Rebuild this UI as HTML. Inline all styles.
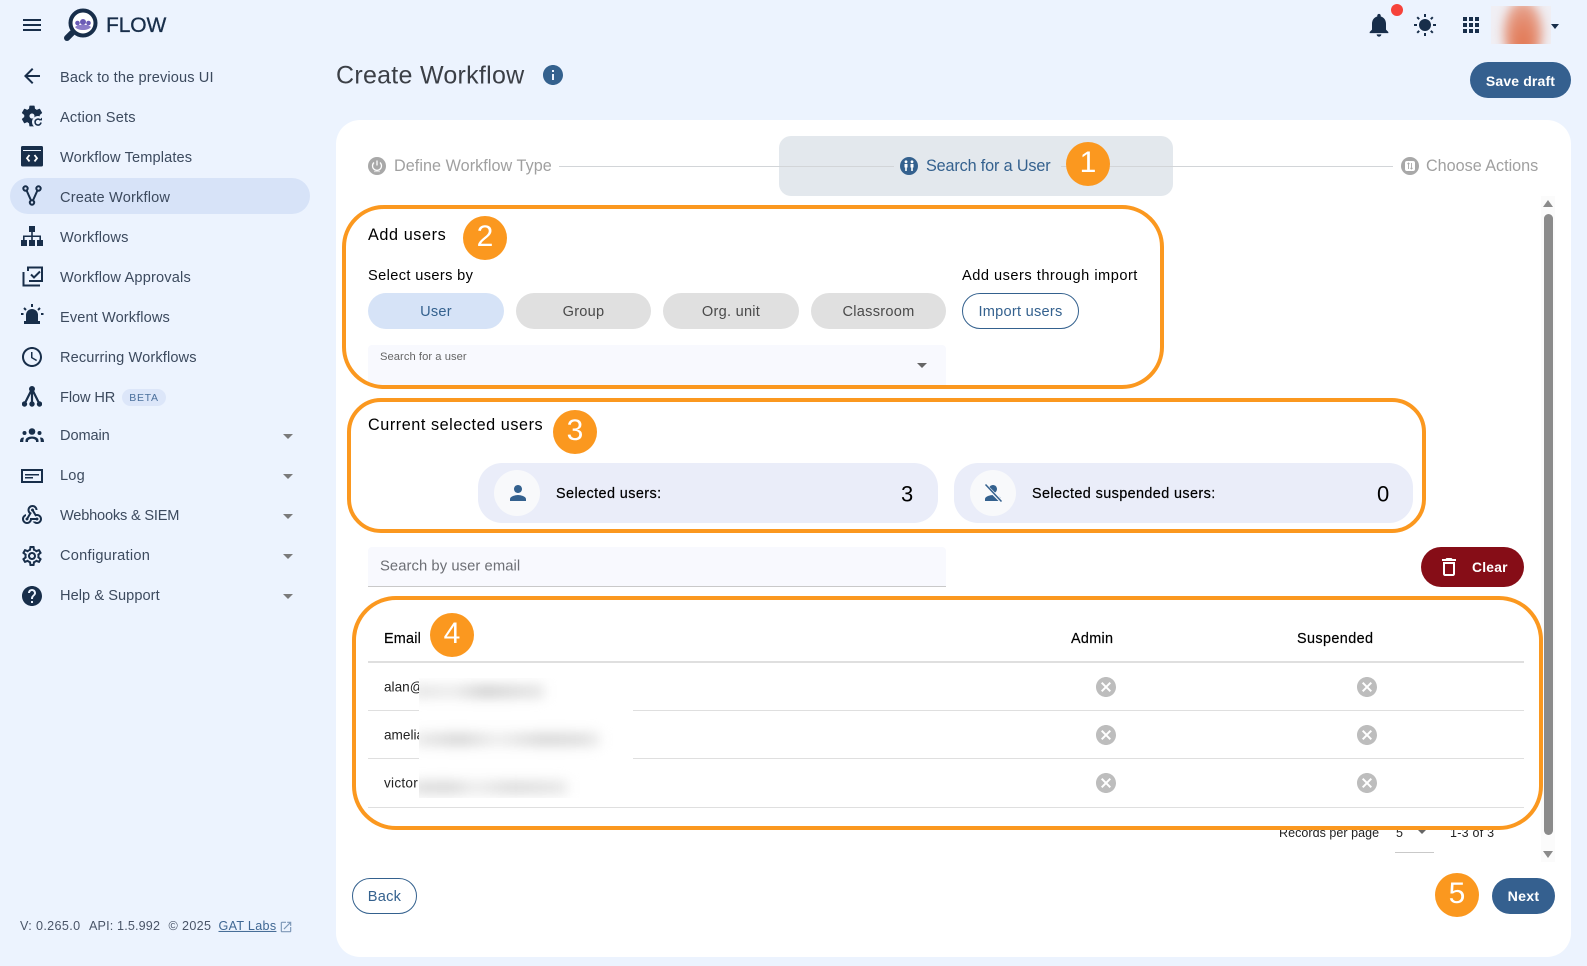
<!DOCTYPE html>
<html><head><meta charset="utf-8"><title>Create Workflow</title>
<style>
html,body{margin:0;padding:0}
body{width:1587px;height:966px;position:relative;overflow:hidden;background:#ecf3fe;font-family:"Liberation Sans",sans-serif;color:#000}
.a{position:absolute}
.t{position:absolute;white-space:nowrap;transform:translateY(calc(-50% + 1.5px));line-height:1.2}
.s{font-size:14.6px;letter-spacing:.17px;color:#3c4a5e;left:60px}
.ic{position:absolute;fill:#182e4a}
.ar{position:absolute;width:0;height:0;border-left:5px solid transparent;border-right:5px solid transparent;border-top:5px solid #7a7a7a}
.pill{position:absolute;border-radius:18px;display:flex;align-items:center;justify-content:center;font-size:14.6px;letter-spacing:.25px;white-space:nowrap;box-sizing:border-box;padding-top:1px}
.g{background:#e0e0e0;color:#4a4a4a}
.o{position:absolute;box-sizing:border-box;border:4px solid #fb981f}
.b{position:absolute;width:44px;height:44px;box-sizing:border-box;padding-bottom:2px;border-radius:50%;background:#fb981f;color:#fff;font-size:30px;display:flex;align-items:center;justify-content:center;line-height:1}
.l{position:absolute;background:#dfdfdf;height:1px}
.x{position:absolute;width:24px;height:24px;fill:#bdbdbd}
.bar{position:absolute;filter:blur(6px);height:13px}
</style></head><body>

<!-- top -->
<svg class="ic" style="left:20px;top:13px" width="24" height="24" viewBox="0 0 24 24"><path d="M3 18h18v-2H3v2zm0-5h18v-2H3v2zm0-7v2h18V6H3z"/></svg>
<svg class="a" style="left:62px;top:7px" width="38" height="36" viewBox="0 0 38 36">
<circle cx="21" cy="16" r="12.5" fill="#fff" stroke="#182e4a" stroke-width="4"/>
<circle cx="21" cy="15" r="3" fill="#6a5bb5"/><circle cx="15.5" cy="16" r="2.3" fill="#6a5bb5"/><circle cx="26.5" cy="16" r="2.3" fill="#6a5bb5"/><path d="M13 20c3 4 13 4 16 0l-3-2H16z" fill="#8b7cc8"/>
<path d="M10 26l-5 5" stroke="#182e4a" stroke-width="6" stroke-linecap="round"/></svg>
<div class="t" style="left:106px;top:24px;font-size:21px;letter-spacing:-.1px;color:#182e4a;-webkit-text-stroke:.3px #182e4a">FLOW</div>

<div class="a" style="left:10px;top:178px;width:300px;height:36px;border-radius:18px;background:#d7e3f8"></div>

<svg class="ic" style="left:20px;top:64px" width="24" height="24" viewBox="0 0 24 24"><path d="M20 11H7.83l5.59-5.59L12 4l-8 8 8 8 1.41-1.41L7.83 13H20v-2z"/></svg>
<div class="t s" style="top:77px;letter-spacing:.12px">Back to the previous UI</div>

<svg class="ic" style="left:19px;top:103px" width="26" height="26" viewBox="0 0 24 24"><path d="M19.14 12.94c.04-.3.06-.61.06-.94 0-.32-.02-.64-.07-.94l2.03-1.58c.18-.14.23-.41.12-.61l-1.92-3.32c-.12-.22-.37-.29-.59-.22l-2.39.96c-.5-.38-1.03-.7-1.62-.94l-.36-2.54c-.04-.24-.24-.41-.48-.41h-3.84c-.24 0-.43.17-.47.41l-.36 2.54c-.59.24-1.13.57-1.62.94l-2.39-.96c-.22-.08-.47 0-.59.22L2.74 8.87c-.12.21-.08.47.12.61l2.03 1.58c-.05.3-.09.63-.09.94s.02.64.07.94l-2.03 1.58c-.18.14-.23.41-.12.61l1.92 3.32c.12.22.37.29.59.22l2.39-.96c.5.38 1.03.7 1.62.94l.36 2.54c.05.24.24.41.48.41h3.84c.24 0 .44-.17.47-.41l.36-2.54c.59-.24 1.13-.56 1.62-.94l2.39.96c.22.08.47 0 .59-.22l1.92-3.32c.12-.22.07-.47-.12-.61l-2.01-1.58zM12 14.3c-1.3 0-2.3-1-2.3-2.3s1-2.3 2.3-2.3 2.3 1 2.3 2.3-1 2.3-2.3 2.3z"/></svg>
<svg class="a" style="left:32px;top:116px" width="12" height="12" viewBox="0 0 12 12"><circle cx="6" cy="6" r="6" fill="#ecf3fe"/><path d="M9 6.5A3 3 0 1 1 8 3.8" fill="none" stroke="#182e4a" stroke-width="1.6"/><path d="M6.8 4.4H10V1.6z" fill="#182e4a"/></svg>
<div class="t s" style="top:117px">Action Sets</div>

<svg class="a" style="left:21px;top:146px" width="22" height="22" viewBox="0 0 22 22"><rect width="22" height="20.5" rx="1.5" fill="#182e4a"/><rect x="2" y="4" width="18" height="1" fill="#ecf3fe"/><path d="M8.5 9l-2.5 3.2 2.5 3.2M13.5 9l2.500 3.2-2.500 3.2" fill="none" stroke="#fff" stroke-width="1.8"/></svg>
<div class="t s" style="top:157px;letter-spacing:.12px">Workflow Templates</div>

<svg class="a" style="left:22px;top:185px" width="20" height="22" viewBox="0 0 20 22" fill="none" stroke="#182e4a" stroke-width="2"><circle cx="3.5" cy="3.5" r="2.2"/><circle cx="16.5" cy="3.5" r="2.2"/><circle cx="10" cy="17.5" r="2.2"/><path d="M4.6 5.500L9 15.400M15.400 5.500L11 15.400"/></svg>
<div class="t s" style="top:197px">Create Workflow</div>

<svg class="a" style="left:21px;top:226px" width="22" height="21" viewBox="0 0 22 21" fill="#182e4a"><rect x="8" y="0" width="6" height="6"/><rect x="0" y="14" width="6" height="6"/><rect x="8" y="14" width="6" height="6"/><rect x="16" y="14" width="6" height="6"/><path d="M10.200 6h1.600v3.500H20V14h-1.600v-3H11.800v3h-1.600v-3H3.600v3H2V9.500h8.200z"/></svg>
<div class="t s" style="top:237px">Workflows</div>

<svg class="a" style="left:22px;top:266px" width="21" height="21" viewBox="0 0 21 21" fill="none" stroke="#182e4a" stroke-width="2"><path d="M6 5V1.500h14V15H7M1.500 6V19.500H18"/><path d="M9 8.500l3 3 6-6" stroke-width="2"/></svg>
<div class="t s" style="top:277px">Workflow Approvals</div>

<svg class="a" style="left:20px;top:304px" width="24" height="23" viewBox="0 0 24 23" fill="#182e4a"><path d="M6 17v-6a6 6 0 0 1 12 0v6h2v3H4v-3z"/><path d="M12 0v3M4 4l2 2M20 4l-2 2M1 10h2.500M21 10h2.500" stroke="#182e4a" stroke-width="2"/></svg>
<div class="t s" style="top:317px;letter-spacing:.1px">Event Workflows</div>

<svg class="ic" style="left:20px;top:345px" width="24" height="24" viewBox="0 0 24 24"><path d="M11.990 2C6.470 2 2 6.480 2 12s4.470 10 9.990 10C17.520 22 22 17.520 22 12S17.520 2 11.990 2zM12 20c-4.420 0-8-3.580-8-8s3.580-8 8-8 8 3.580 8 8-3.580 8-8 8zm.5-13H11v6l5.250 3.150.75-1.230-4.500-2.670z"/></svg>
<div class="t s" style="top:357px;letter-spacing:.12px">Recurring Workflows</div>

<svg class="a" style="left:22px;top:386px" width="20" height="21" viewBox="0 0 20 21" fill="#182e4a" stroke="#182e4a"><circle cx="10" cy="3" r="2.500"/><circle cx="2.500" cy="18" r="2.200"/><circle cx="10" cy="18" r="2.200"/><circle cx="17.500" cy="18" r="2.200"/><path d="M10 3L2.500 18M10 3l7.500 15M10 3v15" fill="none" stroke-width="2.200"/></svg>
<div class="t s" style="top:397px;letter-spacing:-.1px">Flow HR</div>
<div class="a" style="left:122px;top:389px;width:44px;height:17px;border-radius:9px;background:#dce6f9;color:#4a6f9c;font-size:10.5px;letter-spacing:.7px;display:flex;align-items:center;justify-content:center">BETA</div>

<svg class="a" style="left:20px;top:428px" width="24" height="15" viewBox="0 0 24 15" fill="#182e4a"><circle cx="12" cy="3.500" r="3.300"/><circle cx="4.500" cy="5" r="2"/><circle cx="19.500" cy="5" r="2"/><path d="M5.500 14v-1.500c0-2.500 3-4 6.500-4s6.500 1.500 6.500 4V14h-2.500v-1c0-1-1.500-2.300-4-2.300s-4 1.300-4 2.300v1zM0 14c0-3 1-4.500 3.500-4.500l.5.300C3.500 11 3.200 12.500 3.300 14zM24 14c0-3-1-4.500-3.500-4.500l-.5.300c.5 1.200.8 2.700.7 4.200z"/></svg>
<div class="t s" style="top:435px;letter-spacing:-.1px">Domain</div>
<div class="ar" style="left:283px;top:434px"></div>

<svg class="a" style="left:21px;top:469px" width="22" height="14" viewBox="0 0 22 14"><rect x="1" y="1" width="20" height="12" fill="none" stroke="#182e4a" stroke-width="2"/><rect x="4" y="5" width="14" height="1.500" fill="#182e4a"/><rect x="4" y="8" width="8" height="1.500" fill="#182e4a"/></svg>
<div class="t s" style="top:475px">Log</div>
<div class="ar" style="left:283px;top:474px"></div>

<svg class="ic" style="left:20px;top:503px" width="24" height="24" viewBox="0 0 24 24"><path d="M10 15h5.880c.27-.31.67-.5 1.120-.5.83 0 1.500.67 1.500 1.500s-.67 1.500-1.500 1.500c-.44 0-.84-.19-1.120-.5H11.900c-.46 2.280-2.480 4-4.900 4-2.760 0-5-2.240-5-5 0-2.420 1.720-4.440 4-4.900v2.060C4.840 13.560 4 14.680 4 16c0 1.650 1.350 3 3 3s3-1.350 3-3v-1zm2.500-11c1.650 0 3 1.350 3 3h2c0-2.760-2.240-5-5-5s-5 2.240-5 5c0 1.430.6 2.710 1.560 3.620l-2.350 3.910c-.68.140-1.210.750-1.210 1.470 0 .83.67 1.500 1.500 1.500s1.500-.67 1.500-1.500c0-.16-.02-.31-.07-.45l3.380-5.630C10.890 9.480 9.500 8.690 9.500 7c0-1.650 1.350-3 3-3zm4.500 9c-.64 0-1.230.2-1.720.54l-3.050-5.060C11.530 8.350 11 7.740 11 7c0-.83.67-1.500 1.500-1.500S14 6.170 14 7c0 .15-.02.290-.06.430l2.190 3.640c.28-.05.57-.07.870-.07 2.760 0 5 2.240 5 5s-2.240 5-5 5c-1.850 0-3.470-1.010-4.330-2.500h2.670c.48.320 1.050.500 1.660.500 1.650 0 3-1.350 3-3s-1.350-3-3-3z"/></svg>
<div class="t s" style="top:515px;letter-spacing:-.2px">Webhooks &amp; SIEM</div>
<div class="ar" style="left:283px;top:514px"></div>

<svg class="ic" style="left:20px;top:544px" width="24" height="24" viewBox="0 0 24 24"><path d="M19.430 12.980c.04-.32.070-.64.070-.98s-.03-.66-.07-.98l2.110-1.650c.19-.15.240-.42.120-.64l-2-3.460c-.12-.22-.39-.3-.61-.22l-2.490 1c-.52-.4-1.080-.73-1.690-.98l-.38-2.650A.488.488 0 0 0 14 2h-4c-.25 0-.46.180-.49.420l-.38 2.650c-.61.250-1.170.590-1.690.980l-2.490-1c-.23-.090-.49 0-.61.220l-2 3.460c-.13.220-.07.490.12.640l2.110 1.650c-.04.320-.07.650-.07.980s.03.660.07.980l-2.110 1.650c-.19.150-.24.420-.12.640l2 3.460c.12.220.39.300.61.220l2.490-1c.52.400 1.080.730 1.690.980l.38 2.650c.03.240.24.420.49.420h4c.25 0 .46-.180.49-.420l.38-2.650c.61-.250 1.170-.590 1.690-.980l2.490 1c.23.090.49 0 .61-.220l2-3.460c.12-.22.070-.49-.12-.64l-2.110-1.650zM17.450 11.270c.04.310.05.520.05.730 0 .210-.02.430-.05.730l-.14 1.130.89.700 1.080.840-.7 1.210-1.270-.51-1.040-.42-.9.680c-.43.320-.84.560-1.250.730l-1.060.430-.16 1.130-.2 1.350h-1.400l-.19-1.350-.16-1.130-1.060-.43c-.43-.18-.83-.41-1.230-.71l-.91-.70-1.060.43-1.270.51-.7-1.210 1.080-.84.890-.70-.14-1.130c-.03-.31-.05-.54-.05-.74s.02-.43.050-.73l.14-1.130-.89-.70-1.080-.84.7-1.210 1.270.51 1.040.42.9-.68c.43-.32.84-.56 1.250-.73l1.060-.43.160-1.130.2-1.350h1.390l.19 1.350.16 1.130 1.060.43c.43.180.83.410 1.230.71l.91.700 1.060-.43 1.270-.51.7 1.210-1.070.85-.89.70.14 1.130zM12 8c-2.210 0-4 1.790-4 4s1.790 4 4 4 4-1.790 4-4-1.790-4-4-4zm0 6c-1.100 0-2-.9-2-2s.9-2 2-2 2 .9 2 2-.9 2-2 2z"/></svg>
<div class="t s" style="top:555px;letter-spacing:.25px">Configuration</div>
<div class="ar" style="left:283px;top:554px"></div>

<svg class="ic" style="left:20px;top:584px" width="24" height="24" viewBox="0 0 24 24"><path d="M12 2C6.480 2 2 6.480 2 12s4.480 10 10 10 10-4.480 10-10S17.520 2 12 2zm1 17h-2v-2h2v2zm2.070-7.750l-.9.920C13.450 12.900 13 13.500 13 15h-2v-.5c0-1.100.45-2.100 1.170-2.830l1.240-1.260c.37-.36.59-.86.59-1.410 0-1.100-.9-2-2-2s-2 .9-2 2H8c0-2.210 1.790-4 4-4s4 1.790 4 4c0 .88-.36 1.680-.93 2.250z"/></svg>
<div class="t s" style="top:595px;letter-spacing:.05px">Help &amp; Support</div>
<div class="ar" style="left:283px;top:594px"></div>

<div class="t" style="left:20px;top:925px;font-size:12.6px;letter-spacing:.35px;color:#4a5568">V: 0.265.0</div>
<div class="t" style="left:89px;top:925px;font-size:12.6px;letter-spacing:.15px;color:#4a5568">API: 1.5.992</div>
<div class="t" style="left:168.5px;top:925px;font-size:12.6px;letter-spacing:.35px;color:#4a5568">© 2025</div>
<div class="t" style="left:218.5px;top:925px;font-size:12.6px;letter-spacing:.3px;color:#3f6793;text-decoration:underline">GAT Labs</div>
<svg class="a" style="left:279px;top:920px;fill:#7e98b8" width="14" height="14" viewBox="0 0 24 24"><path d="M19 19H5V5h7V3H5c-1.110 0-2 .9-2 2v14c0 1.100.89 2 2 2h14c1.100 0 2-.9 2-2v-7h-2v7zM14 3v2h3.590l-9.830 9.830 1.410 1.410L19 6.410V10h2V3h-7z"/></svg>

<!-- top right -->
<svg class="ic" style="left:1365px;top:11px" width="28" height="28" viewBox="0 0 24 24"><path d="M12 22c1.100 0 2-.9 2-2h-4c0 1.100.89 2 2 2zm6-6v-5c0-3.070-1.640-5.640-4.500-6.320V4c0-.83-.67-1.500-1.500-1.500s-1.500.67-1.500 1.500v.68C7.630 5.360 6 7.920 6 11v5l-2 2v1h16v-1l-2-2z"/></svg>
<div class="a" style="left:1391px;top:4px;width:12px;height:12px;border-radius:50%;background:#f6423a"></div>
<svg class="a" style="left:1413px;top:13px" width="24" height="24" viewBox="0 0 24 24"><circle cx="12" cy="12" r="6" fill="#182e4a"/><path d="M12 1v3M12 20v3M1 12h3M20 12h3M4.200 4.200l2 2M17.800 17.800l2 2M4.200 19.800l2-2M17.800 6.200l2-2" stroke="#182e4a" stroke-width="2"/></svg>
<svg class="ic" style="left:1459px;top:13px" width="24" height="24" viewBox="0 0 24 24"><path d="M4 8h4V4H4v4zm6 12h4v-4h-4v4zm-6 0h4v-4H4v4zm0-6h4v-4H4v4zm6 0h4v-4h-4v4zm6-10v4h4V4h-4zm-6 4h4V4h-4v4zm6 6h4v-4h-4v4zm0 6h4v-4h-4v4z"/></svg>
<div class="a" style="left:1491px;top:6px;width:60px;height:38px;overflow:hidden;background:#f0eff4"><div class="a" style="left:12px;top:-6px;width:40px;height:64px;border-radius:50%;background:radial-gradient(ellipse at 50% 68%,#e2754f 0%,#e48c70 40%,#e8b5a6 75%,#eddcd9 100%);filter:blur(5px)"></div></div>
<div class="a" style="left:1551px;top:24px;width:0;height:0;border-left:4.500px solid transparent;border-right:4.500px solid transparent;border-top:5px solid #182e4a"></div>

<!-- title -->
<div class="t" style="left:336px;top:74px;font-size:25px;letter-spacing:.28px;color:#3b3f46">Create Workflow</div>
<svg class="a" style="left:541px;top:63px;fill:#34618e" width="24" height="24" viewBox="0 0 24 24"><path d="M12 2C6.480 2 2 6.480 2 12s4.480 10 10 10 10-4.480 10-10S17.520 2 12 2zm1 15h-2v-6h2v6zm0-8h-2V7h2v2z"/></svg>
<div class="pill" style="left:1470px;top:62px;width:101px;height:36px;background:#35608f;color:#fff;font-weight:700;font-size:14px;letter-spacing:.15px">Save draft</div>

<!-- card -->
<div class="a" style="left:336px;top:120px;width:1235px;height:837px;border-radius:24px;background:#fff"></div>

<!-- stepper -->
<div class="a" style="left:779px;top:136px;width:394px;height:60px;border-radius:12px;background:#e3e8ed"></div>
<div class="l" style="left:559px;top:166px;width:335px;background:#d2d5d8"></div>
<div class="l" style="left:1061px;top:166px;width:332px;background:#d2d5d8"></div>
<svg class="a" style="left:367px;top:156px" width="20" height="20" viewBox="0 0 20 20"><circle cx="10" cy="10" r="9" fill="#a8a8a8"/><path d="M7 6.500a4.500 4.500 0 1 0 6 0M10 4.500v5" fill="none" stroke="#fff" stroke-width="1.300"/><path d="M7.500 15.500h5" stroke="#fff" stroke-width="1.300" stroke-dasharray="1 1"/></svg>
<div class="t" style="left:394px;top:165px;font-size:16.200px;letter-spacing:.05px;color:#a0a0a0">Define Workflow Type</div>
<svg class="a" style="left:899px;top:156px" width="20" height="20" viewBox="0 0 20 20"><circle cx="10" cy="10" r="9" fill="#34618e"/><circle cx="7" cy="5.800" r="1.400" fill="#fff"/><circle cx="13" cy="5.800" r="1.400" fill="#fff"/><path d="M5.500 8h3v3.500h-.7V15H6.200v-3.500h-.7zM11.500 8h3v3.500h-.7V15h-1.600v-3.500h-.7z" fill="#fff"/></svg>
<div class="t" style="left:926px;top:165px;font-size:16.200px;letter-spacing:-.14px;color:#34618e">Search for a User</div>
<div class="b" style="left:1066px;top:142px">1</div>
<svg class="a" style="left:1400px;top:156px" width="20" height="20" viewBox="0 0 20 20"><circle cx="10" cy="10" r="9" fill="#a8a8a8"/><rect x="5" y="5" width="10" height="10" rx="2" fill="#fff"/><path d="M8.500 7v6M7.500 8l1-1 1 1M11.500 7v6M10.500 12l1 1 1-1" fill="none" stroke="#a8a8a8" stroke-width=".9"/></svg>
<div class="t" style="left:1426px;top:165px;font-size:16.200px;letter-spacing:-.02px;color:#a0a0a0">Choose Actions</div>

<!-- scrollbar -->
<div class="a" style="left:1541px;top:196px;width:14px;height:666px;background:#fbfbfb"></div>
<div class="a" style="left:1544px;top:214px;width:9px;height:621px;border-radius:5px;background:#8b8b8b"></div>
<div class="a" style="left:1543px;top:200px;width:0;height:0;border-left:5px solid transparent;border-right:5px solid transparent;border-bottom:7px solid #8b8b8b"></div>
<div class="a" style="left:1543px;top:851px;width:0;height:0;border-left:5px solid transparent;border-right:5px solid transparent;border-top:7px solid #8b8b8b"></div>

<!-- add users -->
<div class="t" style="left:368px;top:234px;font-size:16.200px;letter-spacing:.6px">Add users</div>
<div class="t" style="left:368px;top:275px;font-size:14.600px;letter-spacing:.37px">Select users by</div>
<div class="pill" style="left:368px;top:293px;width:136px;height:36px;background:#d6e3f7;color:#34618e">User</div>
<div class="pill g" style="left:516px;top:293px;width:135px;height:36px">Group</div>
<div class="pill g" style="left:663px;top:293px;width:136px;height:36px">Org. unit</div>
<div class="pill g" style="left:811px;top:293px;width:135px;height:36px">Classroom</div>
<div class="t" style="left:962px;top:275px;font-size:14.600px;letter-spacing:.5px">Add users through import</div>
<div class="pill" style="left:962px;top:293px;width:117px;height:36px;border:1px solid #34618e;color:#34618e;background:#fff">Import users</div>
<div class="a" style="left:368px;top:345px;width:578px;height:41px;background:#f8f9fe;border-radius:4px 4px 0 0"></div>
<div class="t" style="left:380px;top:356px;font-size:11.200px;letter-spacing:.05px;color:#666">Search for a user</div>
<div class="ar" style="left:917px;top:363px;border-top-color:#666"></div>

<!-- selected -->
<div class="t" style="left:368px;top:424px;font-size:16.200px;letter-spacing:.56px">Current selected users</div>
<div class="a" style="left:478px;top:463px;width:460px;height:60px;border-radius:24px;background:#eaedf9"></div>
<div class="a" style="left:494px;top:470px;width:46px;height:46px;border-radius:50%;background:#f8f9fb"></div>
<svg class="a" style="left:506px;top:482px;fill:#34618e" width="24" height="24" viewBox="0 0 24 24"><path d="M12 12c2.210 0 4-1.790 4-4s-1.790-4-4-4-4 1.790-4 4 1.790 4 4 4zm0 2c-2.670 0-8 1.340-8 4v2h16v-2c0-2.660-5.330-4-8-4z" transform="translate(0 -1)"/></svg>
<div class="t" style="left:556px;top:493px;font-size:14.400px;letter-spacing:.42px;-webkit-text-stroke:.2px #000">Selected users:</div>
<div class="t" style="left:901px;top:493px;font-size:22px">3</div>
<div class="a" style="left:954px;top:463px;width:459px;height:60px;border-radius:24px;background:#eaedf9"></div>
<div class="a" style="left:970px;top:470px;width:46px;height:46px;border-radius:50%;background:#f8f9fb"></div>
<svg class="a" style="left:981px;top:481px" width="24" height="24" viewBox="0 0 24 24"><path d="M12 12c2.210 0 4-1.790 4-4s-1.790-4-4-4-4 1.790-4 4 1.790 4 4 4zm0 2c-2.670 0-8 1.340-8 4v2h16v-2c0-2.660-5.330-4-8-4z" fill="#34618e"/><path d="M4 4l16 16" stroke="#f8f9fb" stroke-width="3.500"/><path d="M4.500 3.500l16 17" stroke="#34618e" stroke-width="1.500"/></svg>
<div class="t" style="left:1032px;top:493px;font-size:14.400px;letter-spacing:.4px;-webkit-text-stroke:.2px #000">Selected suspended users:</div>
<div class="t" style="left:1377px;top:493px;font-size:22px">0</div>

<!-- search email -->
<div class="a" style="left:368px;top:547px;width:578px;height:40px;box-sizing:border-box;background:#f8f9fe;border-bottom:1px solid #c9c9c9;border-radius:4px 4px 0 0"></div>
<div class="t" style="left:380px;top:566px;font-size:14.800px;letter-spacing:.06px;color:#6d6f75">Search by user email</div>
<div class="pill" style="left:1421px;top:547px;width:103px;height:40px;border-radius:20px;background:#860d17;color:#fff;font-weight:700;font-size:13.800px;justify-content:flex-start;padding-left:51px">Clear</div>
<svg class="a" style="left:1437px;top:555px;fill:#fff" width="24" height="24" viewBox="0 0 24 24"><path d="M6 19c0 1.100.9 2 2 2h8c1.100 0 2-.9 2-2V7H6v12zM8 9h8v10H8V9zm7.500-5l-1-1h-5l-1 1H5v2h14V4z"/></svg>

<!-- table -->
<div class="t" style="left:384px;top:638px;font-size:14.400px;letter-spacing:.2px;-webkit-text-stroke:.2px #000">Email</div>
<div class="t" style="left:1071px;top:638px;font-size:14.400px;letter-spacing:.3px;-webkit-text-stroke:.2px #000">Admin</div>
<div class="t" style="left:1297px;top:638px;font-size:14.400px;letter-spacing:.4px;-webkit-text-stroke:.2px #000">Suspended</div>
<div class="l" style="left:368px;top:661px;width:1156px;height:2px"></div>
<div class="l" style="left:368px;top:710px;width:1156px"></div>
<div class="l" style="left:368px;top:758px;width:1156px"></div>
<div class="l" style="left:368px;top:807px;width:1156px"></div>
<div class="t" style="left:384px;top:686px;font-size:13.600px;color:#222">alan@x</div>
<div class="t" style="left:384px;top:734px;font-size:13.600px;color:#222">amelia.x</div>
<div class="t" style="left:384px;top:782px;font-size:13.600px;letter-spacing:.25px;color:#222">victor</div>
<!-- blurred redaction -->
<div class="a" style="left:419px;top:678px;width:214px;height:120px;overflow:hidden">
  <div class="a" style="left:0;top:0;width:160px;height:120px;background:#fff"></div>
  <div class="a" style="left:0;top:18px;width:214px;height:77px;background:#fff"></div>
  <div class="bar" style="left:-6px;top:7px;width:131px;background:linear-gradient(90deg,#e2e2e2,#ececec 30%,#cfcfcf 55%,#dcdcdc 80%,#e4e4e4)"></div>
  <div class="bar" style="left:-6px;top:55px;width:187px;background:linear-gradient(90deg,#ebebeb,#d4d4d4 25%,#eeeeee 45%,#d6d6d6 70%,#dcdcdc 90%,#ececec)"></div>
  <div class="bar" style="left:-6px;top:103px;width:154px;background:linear-gradient(90deg,#dcdcdc,#d8d8d8 25%,#ededed 40%,#dadada 65%,#e6e6e6)"></div>
</div>
<svg class="x" style="left:1094px;top:675px" viewBox="0 0 24 24"><path d="M12 2C6.470 2 2 6.470 2 12s4.470 10 10 10 10-4.470 10-10S17.530 2 12 2zm5 13.590L15.590 17 12 13.410 8.410 17 7 15.590 10.590 12 7 8.410 8.410 7 12 10.590 15.590 7 17 8.410 13.410 12 17 15.590z"/></svg>
<svg class="x" style="left:1355px;top:675px" viewBox="0 0 24 24"><path d="M12 2C6.470 2 2 6.470 2 12s4.470 10 10 10 10-4.470 10-10S17.530 2 12 2zm5 13.590L15.590 17 12 13.410 8.410 17 7 15.590 10.590 12 7 8.410 8.410 7 12 10.590 15.590 7 17 8.410 13.410 12 17 15.590z"/></svg>
<svg class="x" style="left:1094px;top:723px" viewBox="0 0 24 24"><path d="M12 2C6.470 2 2 6.470 2 12s4.470 10 10 10 10-4.470 10-10S17.530 2 12 2zm5 13.590L15.590 17 12 13.410 8.410 17 7 15.590 10.590 12 7 8.410 8.410 7 12 10.590 15.590 7 17 8.410 13.410 12 17 15.590z"/></svg>
<svg class="x" style="left:1355px;top:723px" viewBox="0 0 24 24"><path d="M12 2C6.470 2 2 6.470 2 12s4.470 10 10 10 10-4.470 10-10S17.530 2 12 2zm5 13.590L15.590 17 12 13.410 8.410 17 7 15.590 10.590 12 7 8.410 8.410 7 12 10.590 15.590 7 17 8.410 13.410 12 17 15.590z"/></svg>
<svg class="x" style="left:1094px;top:771px" viewBox="0 0 24 24"><path d="M12 2C6.470 2 2 6.470 2 12s4.470 10 10 10 10-4.470 10-10S17.530 2 12 2zm5 13.590L15.590 17 12 13.410 8.410 17 7 15.590 10.590 12 7 8.410 8.410 7 12 10.590 15.590 7 17 8.410 13.410 12 17 15.590z"/></svg>
<svg class="x" style="left:1355px;top:771px" viewBox="0 0 24 24"><path d="M12 2C6.470 2 2 6.470 2 12s4.470 10 10 10 10-4.470 10-10S17.530 2 12 2zm5 13.590L15.590 17 12 13.410 8.410 17 7 15.590 10.590 12 7 8.410 8.410 7 12 10.590 15.590 7 17 8.410 13.410 12 17 15.590z"/></svg>

<!-- pagination -->
<div class="t" style="left:1279px;top:832px;font-size:12.500px;letter-spacing:.05px;color:#222">Records per page</div>
<div class="t" style="left:1396px;top:832px;font-size:12.500px;color:#222">5</div>
<div class="ar" style="left:1417px;top:829px;border-top-color:#666"></div>
<div class="l" style="left:1395px;top:852px;width:39px;background:#c9c9c9"></div>
<div class="t" style="left:1450px;top:832px;font-size:12.500px;letter-spacing:.25px;color:#222">1-3 of 3</div>

<!-- footer buttons -->
<div class="pill" style="left:352px;top:878px;width:65px;height:36px;border:1px solid #34618e;color:#34618e;background:#fff">Back</div>
<div class="pill" style="left:1492px;top:878px;width:63px;height:36px;background:#35608f;color:#fff;font-weight:700;font-size:14.200px">Next</div>

<!-- annotation outlines -->
<div class="o" style="left:342px;top:205px;width:822px;height:184px;border-radius:42px"></div>
<div class="o" style="left:347px;top:398px;width:1079px;height:135px;border-radius:34px"></div>
<div class="o" style="left:352px;top:596px;width:1191px;height:234px;border-radius:44px"></div>
<div class="b" style="left:463px;top:216px">2</div>
<div class="b" style="left:553px;top:410px">3</div>
<div class="b" style="left:430px;top:613px">4</div>
<div class="b" style="left:1435px;top:873px">5</div>
</body></html>
